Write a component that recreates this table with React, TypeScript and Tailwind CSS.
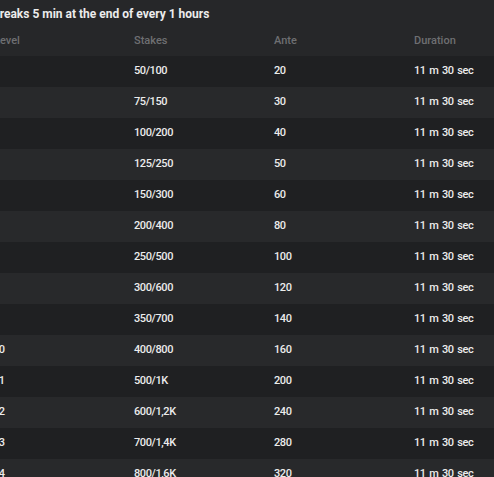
import React from "react";

const rows: [string, string, string, string][] = [
  ["1", "50/100", "20", "11 m 30 sec"],
  ["2", "75/150", "30", "11 m 30 sec"],
  ["3", "100/200", "40", "11 m 30 sec"],
  ["4", "125/250", "50", "11 m 30 sec"],
  ["5", "150/300", "60", "11 m 30 sec"],
  ["6", "200/400", "80", "11 m 30 sec"],
  ["7", "250/500", "100", "11 m 30 sec"],
  ["8", "300/600", "120", "11 m 30 sec"],
  ["9", "350/700", "140", "11 m 30 sec"],
  ["10", "400/800", "160", "11 m 30 sec"],
  ["11", "500/1K", "200", "11 m 30 sec"],
  ["12", "600/1,2K", "240", "11 m 30 sec"],
  ["13", "700/1,4K", "280", "11 m 30 sec"],
  ["14", "800/1,6K", "320", "11 m 30 sec"],
];

export default function App() {
  return (
    <div
      className="w-[494px] h-[477px] overflow-hidden bg-[#262729]"
      style={{ fontFamily: 'Roboto, "Noto Sans", sans-serif' }}
    >
      <div className="-ml-[7px] w-[570px]">
        <div className="-ml-[1px] h-[27px] flex items-center text-[12px] font-bold text-[#ececec] pt-[1px]">
          Breaks 5 min at the end of every 1 hours
        </div>
        <div className="grid grid-cols-[141px_140px_140px_140px] h-[29px] items-center text-[11px] font-medium text-[#6e6f72]">
          <div className="pl-[1px]">Level</div>
          <div>Stakes</div>
          <div>Ante</div>
          <div>Duration</div>
        </div>
        {rows.map((r, i) => (
          <div
            key={i}
            className={`grid grid-cols-[141px_140px_140px_140px] h-[31px] items-center text-[11px] font-medium tracking-[-0.4px] [word-spacing:1.2px] text-[#ececec] ${
              i % 2 === 0 ? "bg-[#1f2022]" : "bg-[#28292b]"
            }`}
          >
            <div>{r[0]}</div>
            <div>{r[1]}</div>
            <div>{r[2]}</div>
            <div>{r[3]}</div>
          </div>
        ))}
      </div>
    </div>
  );
}
